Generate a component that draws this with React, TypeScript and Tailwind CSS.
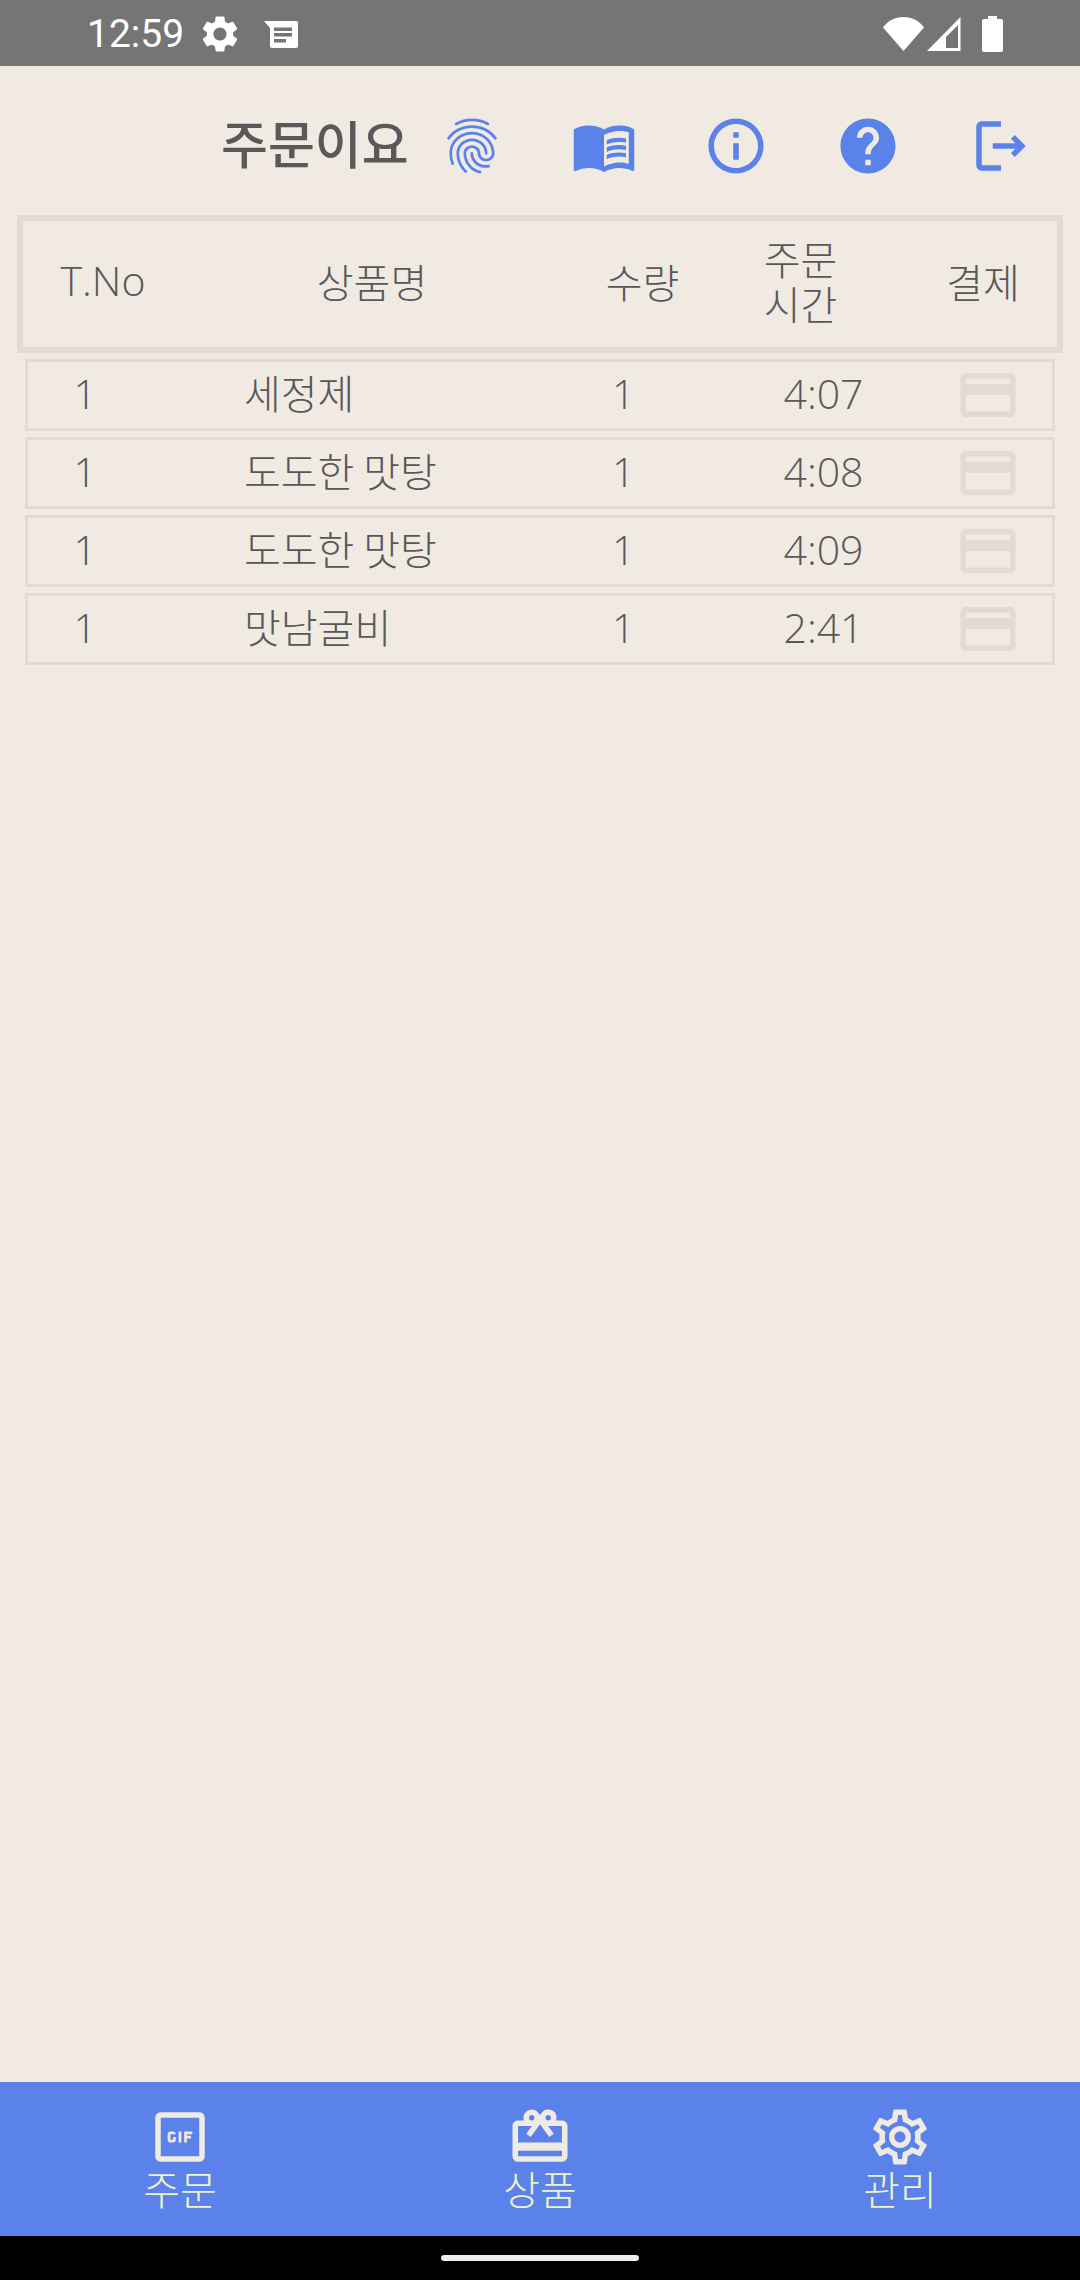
import { MdFingerprint, MdMenuBook, MdInfoOutline, MdHelp, MdSettings, MdOutlineGifBox, MdOutlineCardGiftcard, MdOutlineSettings, MdOutlineCreditCard } from 'react-icons/md';

const orders = [
  { table: '1', name: '세정제', qty: '1', time: '4:07' },
  { table: '1', name: '도도한 맛탕', qty: '1', time: '4:08' },
  { table: '1', name: '도도한 맛탕', qty: '1', time: '4:09' },
  { table: '1', name: '맛남굴비', qty: '1', time: '2:41' },
];

const tabs = [
  { label: '주문', Icon: MdOutlineGifBox },
  { label: '상품', Icon: MdOutlineCardGiftcard },
  { label: '관리', Icon: MdOutlineSettings },
];

function StatusBar() {
  return (
    <div className="h-[66px] shrink-0 bg-[#757575] flex items-center pt-[2px] pl-[87px] pr-[77px] text-white">
      <span className="w-[96px] font-['Roboto',sans-serif] text-[39px] leading-none">12:59</span>
      <MdSettings className="ml-[15px] w-[44px] h-[44px]" />
      {/* notification icon */}
      <svg viewBox="0 0 34 27" className="ml-[22px] w-[34px] h-[27px]" fill="currentColor">
        <path fillRule="evenodd" d="M0 0H32a2 2 0 0 1 2 2V25a2 2 0 0 1-2 2H8a2 2 0 0 1-2-2V7ZM10 6.500V10H28V6.500ZM10 12V15.500H28V12ZM10 18V21.500H22V18Z" />
      </svg>
      <div className="ml-auto flex items-center">
        <svg viewBox="0 0 41 34" className="w-[41px] h-[34px]" fill="currentColor">
          <path d="M0 10.500C5 3.500 12 0 20.500 0S36 3.500 41 10.500L20.500 34Z" />
        </svg>
        <svg viewBox="0 0 34 34" className="ml-[3px] w-[34px] h-[34px]" fill="currentColor">
          <path fillRule="evenodd" d="M33.500 0V34H0ZM31 8 19 20V31H31Z" />
        </svg>
        <svg viewBox="0 0 21 36" className="ml-[21px] w-[21px] h-[36px]" fill="currentColor">
          <path d="M6 0H15V3H19A2 2 0 0 1 21 5V34A2 2 0 0 1 19 36H2A2 2 0 0 1 0 34V5A2 2 0 0 1 2 3H6Z" />
        </svg>
      </div>
    </div>
  );
}

function TitleBar() {
  return (
    <div className="h-[149px] shrink-0 flex items-center pt-[10px] pl-[221px] text-[#5b82ea]">
      <h1 className="mb-[7px] w-[184px] text-[51px] leading-none font-medium text-[#595959] whitespace-nowrap">주문이요</h1>
      <MdFingerprint className="ml-[34px] w-[66px] h-[66px]" />
      <MdMenuBook className="ml-[66px] w-[66px] h-[66px]" />
      <MdInfoOutline className="ml-[66px] w-[66px] h-[66px]" />
      <MdHelp className="ml-[66px] w-[66px] h-[66px]" />
      <svg viewBox="0 0 24 24" className="ml-[67px] w-[66px] h-[66px]" fill="currentColor">
        <path d="M5 5h7V3H5c-1.100 0-2 .9-2 2v14c0 1.100.9 2 2 2h7v-2H5V5z" />
        <path d="M17 8l-1.400 1.400L17.200 11H9v2h8.200l-1.600 1.600L17 16l4-4z" />
      </svg>
    </div>
  );
}

function OrderTable() {
  return (
    <div className="flex flex-col gap-[6px] pl-[17px] pr-[17px] text-[40px] font-light text-[#585858]">
      <div className="h-[138px] border-[6px] border-[#e2dbcf] grid grid-cols-[160px_378px_163px_153px_180px] items-center text-center">
        <span className="pb-[6px] font-['Open_Sans',sans-serif] text-[41px]">T.No</span>
        <span className="pb-[6px]">상품명</span>
        <span className="pb-[6px]">수량</span>
        <span className="pb-[6px] leading-[45px]">주문<br />시간</span>
        <span className="pb-[6px] pl-[32px]">결제</span>
      </div>
      {orders.map((order, idx) => (
        <div key={idx} className="mx-[8px] h-[72px] border-[3px] border-[#e2dbcf] grid grid-cols-[108px_416px_140px_263px_66px] items-center">
          <span className="pb-[3px] pl-[6px] text-center font-['Open_Sans',sans-serif]">{order.table}</span>
          <span className="pb-[6px] pl-[108px] whitespace-nowrap">{order.name}</span>
          <span className="pb-[3px] pl-[3px] text-center font-['Open_Sans',sans-serif]">{order.qty}</span>
          <span className="pb-[3px] text-center font-['Open_Sans',sans-serif] text-[41px]">{order.time}</span>
          <MdOutlineCreditCard className="w-[66px] h-[66px] text-[#e2dbcf]" />
        </div>
      ))}
    </div>
  );
}

function BottomTabs() {
  return (
    <div className="mt-auto h-[154px] shrink-0 bg-[#5b82ea] grid grid-cols-3">
      {tabs.map(({ label, Icon }) => (
        <div key={label} className="flex flex-col items-center pt-[22px]">
          <Icon className="w-[66px] h-[66px] text-[#f0eae4]" />
          <span className="-mt-[4px] text-[40px] leading-[44px] font-light text-[#eef3c4]">{label}</span>
        </div>
      ))}
    </div>
  );
}

export default function App() {
  return (
    <div className="w-[1080px] h-[2280px] flex flex-col overflow-hidden bg-[#f0eae3] font-['Noto_Sans_CJK_KR','Noto_Sans',sans-serif]">
      <StatusBar />
      <TitleBar />
      <OrderTable />
      <BottomTabs />
      <div className="h-[44px] shrink-0 bg-black flex items-center justify-center">
        <div className="w-[198px] h-[6px] rounded-full bg-[#eeeeee]" />
      </div>
    </div>
  );
}
